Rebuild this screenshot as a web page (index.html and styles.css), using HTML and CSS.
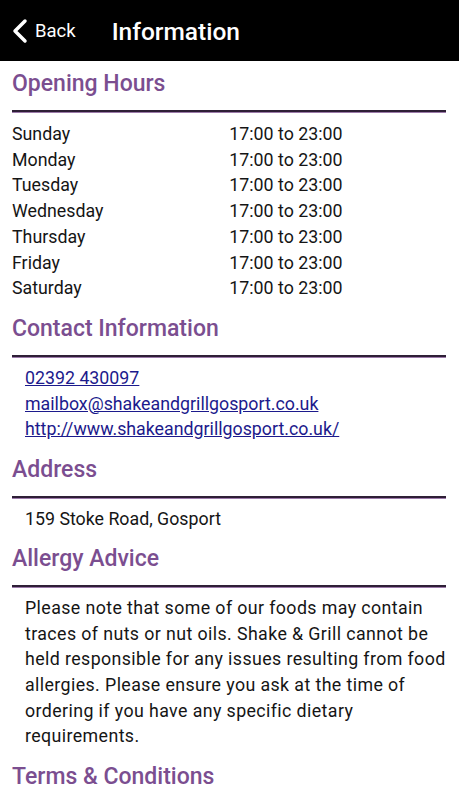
FILE: index.html
```html
<!DOCTYPE html>
<html lang="en">
<head>
    <meta charset="UTF-8">
    <meta name="viewport" content="width=device-width, initial-scale=1.0">
    <title>Information</title>
    <link rel="stylesheet" href="styles.css">
</head>
<body>

<div class="topbar">
    <a class="back" href="#">
        <svg width="16" height="26" viewBox="0 0 16 26"><path d="M13 3 L3 13 L13 23" fill="none" stroke="#fff" stroke-width="3.5" stroke-linecap="round" stroke-linejoin="round"/></svg>
        <span>Back</span>
    </a>
    <h1>Information</h1>
</div>

<div class="content">
    <h2>Opening Hours</h2>
    <hr>
    <table class="hours">
        <tr><td>Sunday</td><td>17:00 to 23:00</td></tr>
        <tr><td>Monday</td><td>17:00 to 23:00</td></tr>
        <tr><td>Tuesday</td><td>17:00 to 23:00</td></tr>
        <tr><td>Wednesday</td><td>17:00 to 23:00</td></tr>
        <tr><td>Thursday</td><td>17:00 to 23:00</td></tr>
        <tr><td>Friday</td><td>17:00 to 23:00</td></tr>
        <tr><td>Saturday</td><td>17:00 to 23:00</td></tr>
    </table>

    <h2>Contact Information</h2>
    <hr>
    <div class="block">
        <a href="#">02392 430097</a><br>
        <a href="#">mailbox@shakeandgrillgosport.co.uk</a><br>
        <a href="#">http://www.shakeandgrillgosport.co.uk/</a>
    </div>

    <h2>Address</h2>
    <hr>
    <div class="block">159 Stoke Road, Gosport</div>

    <h2>Allergy Advice</h2>
    <hr>
    <div class="block spaced">Please note that some of our foods may contain traces of nuts or nut oils. Shake &amp; Grill cannot be held responsible for any issues resulting from food allergies. Please ensure you ask at the time of ordering if you have any specific dietary requirements.</div>

    <h2>Terms &amp; Conditions</h2>
    <hr>
</div>

</body>
</html>
```

FILE: styles.css
```css
body {
    margin: 0;
    font-family: Roboto, "Liberation Sans", sans-serif;
    color: #151515;
    background: #fff;
}
.topbar {
    background-color: #000;
    height: 61px;
    display: flex;
    align-items: center;
    padding: 0 12px;
    color: #fff;
}
.back {
    display: flex;
    align-items: center;
    gap: 7px;
    color: #fff;
    text-decoration: none;
    font-size: 18.5px;
    margin-right: 36px;
}
.back span {
    margin-top: 1px;
}
.topbar h1 {
    margin: 0;
    font-size: 24.5px;
    font-weight: 500;
    margin-top: 2px;
}
.content {
    padding: 8px 13px 0 12px;
}
h2 {
    margin: 0;
    color: #7b4e90;
    font-size: 23px;
    font-weight: 500;
    line-height: 30px;
}
hr {
    border: none;
    border-top: 2px solid #2e1f36;
    box-shadow: 0 1px 0 #9c7aaa;
    margin: 11px 0 9px;
}
.hours {
    border-collapse: collapse;
    font-size: 17.8px;
    margin-bottom: 13px;
}
.hours td {
    padding: 0;
    line-height: 25.7px;
    width: 219px;
}
.block {
    padding-left: 13px;
    font-size: 17.8px;
    line-height: 25.6px;
    margin: -1px 0 13px;
}
.block a {
    color: #1c1a8c;
}
.spaced {
    letter-spacing: 0.4px;
}
```
